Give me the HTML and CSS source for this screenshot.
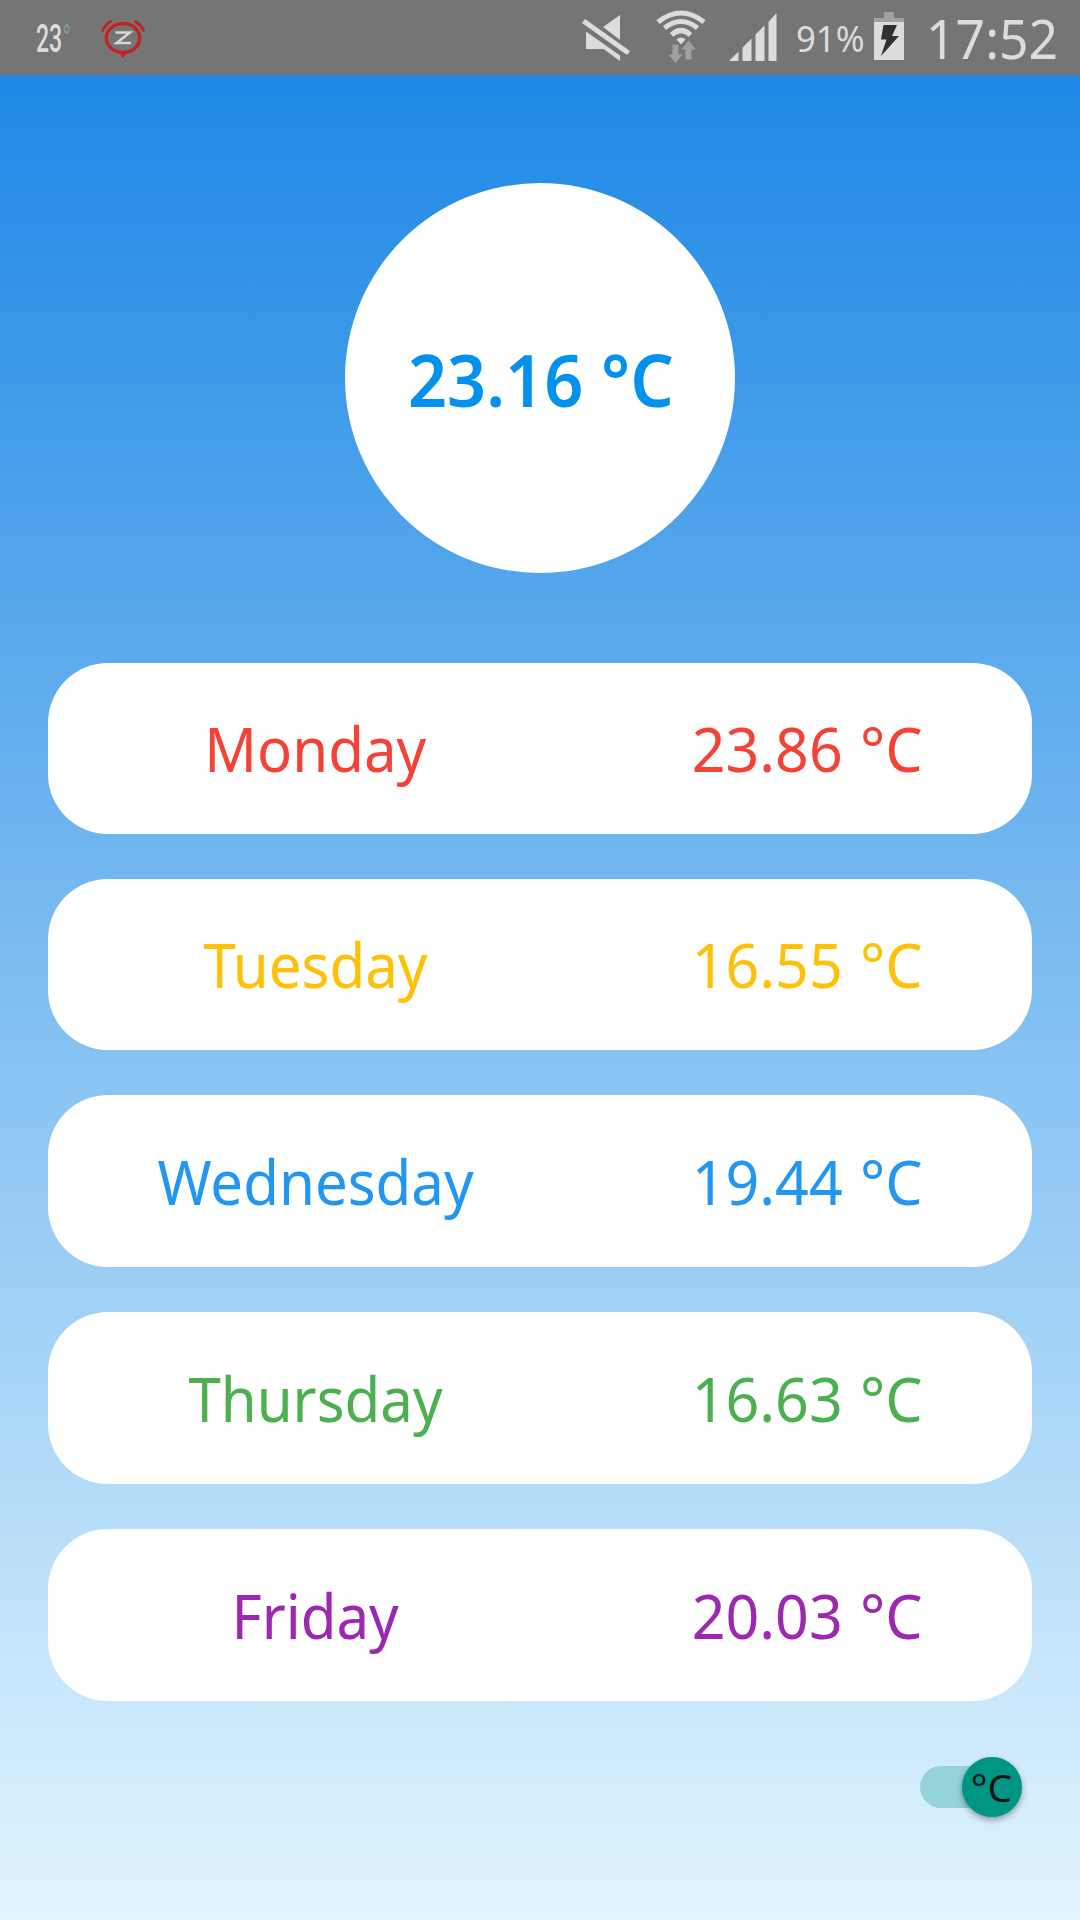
FILE: index.html
```html
<!DOCTYPE html>
<html lang="en">
<head>
<meta charset="utf-8">
<title>Weather</title>
<link rel="stylesheet" href="styles.css">
</head>
<body>
<header class="status">
  <div class="status-left">
    <span class="outdoor">23<span class="degree">°</span></span>
    <svg class="alarm" viewBox="0 0 46 41" width="46" height="41">
      <ellipse cx="23" cy="20" rx="16.700" ry="14.500" fill="none" stroke="#c02427" stroke-width="3.4"/>
      <path d="M19 34h8l-4 6.500z" fill="#c02427"/>
      <path d="M2 13.500Q5 6 11.500 3M34.500 3Q41 6 44 13.500" fill="none" stroke="#b5282a" stroke-width="3"/>
      <path d="M15.500 14.500H30L16.500 25H31" fill="none" stroke="#d8d8d8" stroke-width="2.400"/>
    </svg>
  </div>
  <div class="status-right">
    <svg class="mute" viewBox="0 0 48 48" width="48" height="48" fill="#dcdcdc">
      <path d="M3 17.500L37 41.500V47L20.500 35H3z"/>
      <path d="M20 13L37 1V26z"/>
      <path d="M2 5L47 37L44 41L-1 9z"/>
    </svg>
    <svg class="wifi" viewBox="0 0 50 54" width="50" height="54">
      <g fill="none" stroke="#dcdcdc" stroke-width="5">
        <path d="M2 12Q25-6 48 12"/>
        <path d="M8.500 18Q25 5 41.500 18"/>
        <path d="M15.500 25Q25 16 34.500 25"/>
      </g>
      <path d="M20.500 29.500Q25 25.500 29.500 29.500L25 34.500z" fill="#dcdcdc"/>
      <path d="M16.500 34.500h6v10h4l-7 8.500-7-8.500h4zM29.500 49.500h6v-10h4.500l-7.500-9-7 9h4z" fill="#a0a0a0"/>
    </svg>
    <svg class="signal" viewBox="0 0 48 48" width="48" height="48" fill="#dcdcdc">
      <path d="M0 48l9.500-9.500V48zM13.500 48V34.500l9-9V48zM26.500 48V21.500l9-9V48zM39.500 48V9l8-9V48z"/>
    </svg>
    <span class="percent">91%</span>
    <svg class="battery" viewBox="0 0 30 48" width="30" height="48">
      <path d="M10 0H20V6H30V10H0V6H10z" fill="#a0a0a0"/>
      <path d="M0 10H30V48H0z" fill="#dcdcdc"/>
      <path d="M9.500 13H23L18 24H25L7 44L12.500 27.500H7z" fill="#303030"/>
    </svg>
    <span class="clock">17:52</span>
  </div>
</header>
<main class="weather">
  <section class="today"><span class="now">23.16 °C</span></section>
  <ul class="forecast">
    <li class="day red"><span class="name">Monday</span><span class="temp">23.86 °C</span></li>
    <li class="day amber"><span class="name">Tuesday</span><span class="temp">16.55 °C</span></li>
    <li class="day blue"><span class="name">Wednesday</span><span class="temp">19.44 °C</span></li>
    <li class="day green"><span class="name">Thursday</span><span class="temp">16.63 °C</span></li>
    <li class="day purple"><span class="name">Friday</span><span class="temp">20.03 °C</span></li>
  </ul>
  <div class="unit-switch"><span class="thumb"><span class="unit">°C</span></span></div>
</main>
</body>
</html>
```
FILE: styles.css
```css
* { box-sizing: border-box; }
body {
  margin: 0;
  width: 1080px;
  height: 1920px;
  overflow: hidden;
  display: flex;
  flex-direction: column;
  font-family: "Noto Sans", sans-serif;
}
.status {
  height: 75px;
  background: #757575;
  color: #dcdcdc;
  display: flex;
  justify-content: space-between;
}
.status-left, .status-right { display: flex; align-items: flex-start; }
.outdoor {
  font: 500 39px/38px "Roboto", sans-serif;
  margin: 20px 0 0 36px;
  width: 64px;
  transform: scaleX(.59);
  transform-origin: left;
  white-space: nowrap;
}
.degree { color: #839899; }
.alarm { margin-top: 18px; }
.mute { margin: 14px 25px 0 0; overflow: visible; }
.wifi { margin: 10px 23px 0 0; }
.signal { margin: 13px 19px 0 0; }
.percent { font-size: 36px; line-height: 50px; margin-top: 14px; width: 78px; white-space: nowrap; transform: scaleX(.965); transform-origin: left; }
.battery { margin-top: 12px; }
.clock { font-size: 55px; line-height: 60px; margin-top: 8px; margin-left: 22px; width: 154px; white-space: nowrap; transform: scaleX(.94); transform-origin: left; }

.weather {
  flex: 1;
  display: flex;
  flex-direction: column;
  padding: 108px 48px 0;
  background: linear-gradient(#1e88e5, #e1f5fe);
}
.today {
  align-self: center;
  width: 390px;
  height: 390px;
  border-radius: 50%;
  background: #fff;
  display: flex;
  align-items: center;
  justify-content: center;
  padding-left: 2px;
}
.now { color: #0391ee; font-size: 73px; font-weight: 600; white-space: nowrap; transform: scaleX(.937); }
.forecast {
  list-style: none;
  margin: 90px 0 0;
  padding: 0;
  display: grid;
  grid-template-rows: 171px 171px 172px 172px 172px;
  gap: 45px;
}
.day {
  border-radius: 60px;
  background: #fff;
  display: grid;
  grid-template-columns: 535px 448px;
  align-items: center;
  justify-items: center;
  font-size: 62px;
}
.day:nth-child(-n+2) { padding-bottom: 1px; }
.name, .temp { white-space: nowrap; }
.name { transform: scaleX(.938); }
.temp { transform: scaleX(.953); word-spacing: 2px; }
.red { color: #f44336; }
.amber { color: #ffc107; }
.blue { color: #2196f3; }
.green { color: #4caf50; }
.purple { color: #9c27b0; }

.unit-switch {
  align-self: flex-end;
  margin: 65px 12px 0 0;
  width: 100px;
  height: 42px;
  border-radius: 21px;
  background: #95d3da;
  display: flex;
  align-items: center;
  justify-content: flex-end;
}
.thumb {
  width: 60px;
  height: 60px;
  flex: none;
  margin-right: -1.500px;
  border-radius: 50%;
  background: #009484;
  box-shadow: 0 3px 6px rgba(0, 0, 0, .35);
  display: flex;
  align-items: center;
  justify-content: center;
}
.unit { font-size: 39px; line-height: 60px; color: #04140f; white-space: nowrap; }
```
